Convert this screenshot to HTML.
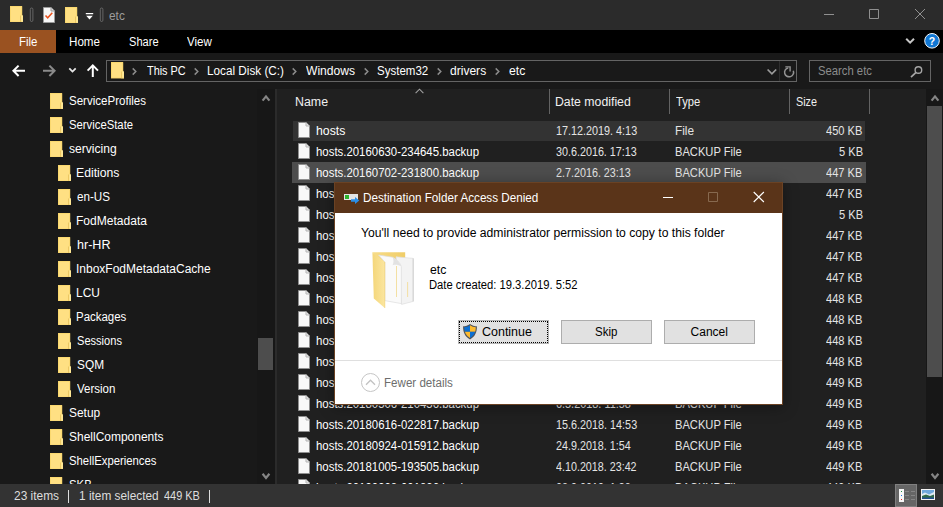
<!DOCTYPE html>
<html><head><meta charset="utf-8"><title>etc</title>
<style>
*{margin:0;padding:0;box-sizing:border-box}
html,body{width:943px;height:507px;overflow:hidden;background:#191919}
body{font-family:"Liberation Sans",sans-serif;font-size:12px;color:#fff;position:relative}
body *{position:absolute}
.t{white-space:nowrap;line-height:16px;height:16px;transform-origin:0 50%}
svg{display:block}
.clip{left:0;top:0;width:943px;height:484px;overflow:hidden}
</style></head><body>

<div style="left:0px;top:0px;width:943px;height:30px;background:#2b2b2b;"></div>
<div style="left:0px;top:30px;width:943px;height:23px;background:#000;"></div>
<div style="left:0px;top:30px;width:56px;height:23px;background:#9a5221;"></div>
<div style="left:0px;top:53px;width:943px;height:35px;background:#191919;"></div>
<div class="clip">
<div style="left:257px;top:89px;width:18px;height:395px;background:#171717;"></div>
<div style="left:275px;top:89px;width:2px;height:395px;background:#2b2b2b;"></div>
<div style="left:277px;top:89px;width:649px;height:395px;background:#202020;"></div>
<div style="left:926px;top:89px;width:17px;height:395px;background:#171717;"></div>
<svg style="left:10px;top:6px" width="13.3" height="16.300" viewBox="0 0 13.3 16.300"><path d="M0 0H12.100V9.400H13.300V16.300H0z" fill="#ffe083"/><path d="M0.400 16V0.400H11.700V9.400" fill="none" stroke="#f7d467" stroke-width=".8"/><path d="M10.300 9.500H13.300V16.300H10.300z" fill="#ffe896"/><path d="M10.600 9.500V16" stroke="#e3bc50" stroke-width=".8"/><path d="M0 15.800H13.300V16.300H0z" fill="#f0c858"/></svg>
<svg style="left:29px;top:7px" width="6" height="16" viewBox="29 7 6 16"><rect x="30.300" y="8" width="2.600" height="13.500" rx="1.300" fill="none" stroke="#747474" stroke-width=".8"/></svg>
<svg style="left:43px;top:7px" width="12" height="16" viewBox="0 0 12 16"><path d="M0.500 0.500h7.500l3.500 3.500v11.500h-11z" fill="#f7f7f7" stroke="#9a9a9a"/><path d="M8 0.500v3.500h3.500" fill="#ddd" stroke="#9a9a9a"/><path d="M2.500 8.500l2.200 2.300l4.600-5" fill="none" stroke="#e8501c" stroke-width="1.500"/></svg>
<svg style="left:65px;top:7px" width="13.3" height="16.300" viewBox="0 0 13.3 16.300"><path d="M0 0H12.100V9.400H13.300V16.300H0z" fill="#ffe083"/><path d="M0.400 16V0.400H11.700V9.400" fill="none" stroke="#f7d467" stroke-width=".8"/><path d="M10.300 9.500H13.300V16.300H10.300z" fill="#ffe896"/><path d="M10.600 9.500V16" stroke="#e3bc50" stroke-width=".8"/><path d="M0 15.800H13.300V16.300H0z" fill="#f0c858"/></svg>
<svg style="left:85px;top:11px" width="10" height="10" viewBox="85 11 10 10"><path d="M85.800 13.100h7.400v1.200h-7.400z M86.200 15.700h6.600L89.500 19.500z" fill="#fff"/></svg>
<svg style="left:99px;top:7px" width="6" height="16" viewBox="99 7 6 16"><rect x="100.300" y="8" width="2.600" height="13.500" rx="1.300" fill="none" stroke="#747474" stroke-width=".8"/></svg>
<span class="t" style="left:109.16px;top:8px;transform:scaleX(0.9868);color:#9c9c9c">etc</span>
<svg style="left:824px;top:14px" width="10" height="1" viewBox="0 0 10 1"><path d="M0 0h10v1H0z" fill="#909090"/></svg>
<svg style="left:868.500px;top:9px" width="10" height="10" viewBox="0 0 10 10"><path d="M0.500 0.500h9v9h-9z" fill="none" stroke="#909090"/></svg>
<svg style="left:915px;top:9px" width="10" height="10" viewBox="0 0 10 10"><path d="M0 0L10 10M10 0L0 10" fill="none" stroke="#909090" stroke-width="1"/></svg>
<span class="t" style="left:18.94px;top:34px;transform:scaleX(0.9551)">File</span>
<span class="t" style="left:69.43px;top:34px;transform:scaleX(0.9672)">Home</span>
<span class="t" style="left:128.85px;top:34px;transform:scaleX(0.9223)">Share</span>
<span class="t" style="left:187.05px;top:34px;transform:scaleX(0.9630)">View</span>
<svg style="left:902px;top:34px" width="16" height="14" viewBox="902 34 16 14"><path d="M906.200 38.800L910.100 42.700L914 38.800" fill="none" stroke="#c6c6c6" stroke-width="2"/></svg>
<svg style="left:923px;top:32px" width="18" height="18" viewBox="923 32 18 18"><circle cx="932" cy="40.800" r="7.300" fill="#1177d3" stroke="#f4f8fc" stroke-width="1"/><text x="932" y="44.600" text-anchor="middle" font-family="Liberation Sans, sans-serif" font-weight="bold" font-size="10.500" fill="#fff" style="position:static">?</text></svg>
<svg style="left:10px;top:62px" width="18" height="18" viewBox="10 62 18 18"><path d="M25 70.800H14M18.600 65.600L13.400 70.800l5.200 5.200" fill="none" stroke="#fff" stroke-width="2"/></svg>
<svg style="left:40px;top:62px" width="18" height="18" viewBox="40 62 18 18"><path d="M43 70.800H54M49.400 65.600L54.600 70.800l-5.200 5.200" fill="none" stroke="#8a8a8a" stroke-width="2"/></svg>
<svg style="left:66px;top:64px" width="14" height="12" viewBox="66 64 14 12"><path d="M69.300 68.400L72.500 71.600L75.700 68.400" fill="none" stroke="#e6e6e6" stroke-width="1.800"/></svg>
<svg style="left:84px;top:62px" width="18" height="18" viewBox="84 62 18 18"><path d="M92.800 77V66M87.600 70.600L92.800 65.400l5.200 5.200" fill="none" stroke="#fff" stroke-width="2"/></svg>
<div style="left:106px;top:60px;width:691px;height:22px;background:#191919;border:1px solid #646464"></div>
<div style="left:809px;top:60px;width:122px;height:22px;background:#191919;border:1px solid #646464"></div>
<svg style="left:110.7px;top:62.3px" width="13.3" height="16.300" viewBox="0 0 13.3 16.300"><path d="M0 0H12.100V9.400H13.300V16.300H0z" fill="#ffe083"/><path d="M0.400 16V0.400H11.700V9.400" fill="none" stroke="#f7d467" stroke-width=".8"/><path d="M10.300 9.500H13.300V16.300H10.300z" fill="#ffe896"/><path d="M10.600 9.500V16" stroke="#e3bc50" stroke-width=".8"/><path d="M0 15.800H13.300V16.300H0z" fill="#f0c858"/></svg>
<span class="t" style="left:146.63px;top:63px;transform:scaleX(0.9069)">This PC</span>
<span class="t" style="left:206.92px;top:63px;transform:scaleX(0.9785)">Local Disk (C:)</span>
<span class="t" style="left:306.3px;top:63px;transform:scaleX(1.0083)">Windows</span>
<span class="t" style="left:377.32px;top:63px;transform:scaleX(0.9597)">System32</span>
<span class="t" style="left:450.4px;top:63px;transform:scaleX(1.0043)">drivers</span>
<span class="t" style="left:508.89px;top:63px;transform:scaleX(1.0197)">etc</span>
<svg style="left:131px;top:66px" width="8" height="11" viewBox="131 66 8 11"><path d="M132.70 68.400L135.80 71.500L132.70 74.600" fill="none" stroke="#8c8c8c" stroke-width="1.500"/></svg>
<svg style="left:192.75px;top:66px" width="8" height="11" viewBox="192.75 66 8 11"><path d="M194.45 68.400L197.55 71.500L194.45 74.600" fill="none" stroke="#8c8c8c" stroke-width="1.500"/></svg>
<svg style="left:290.5px;top:66px" width="8" height="11" viewBox="290.5 66 8 11"><path d="M292.20 68.400L295.30 71.500L292.20 74.600" fill="none" stroke="#8c8c8c" stroke-width="1.500"/></svg>
<svg style="left:362.5px;top:66px" width="8" height="11" viewBox="362.5 66 8 11"><path d="M364.20 68.400L367.30 71.500L364.20 74.600" fill="none" stroke="#8c8c8c" stroke-width="1.500"/></svg>
<svg style="left:435.5px;top:66px" width="8" height="11" viewBox="435.5 66 8 11"><path d="M437.20 68.400L440.30 71.500L437.20 74.600" fill="none" stroke="#8c8c8c" stroke-width="1.500"/></svg>
<svg style="left:494px;top:66px" width="8" height="11" viewBox="494 66 8 11"><path d="M495.70 68.400L498.80 71.500L495.70 74.600" fill="none" stroke="#8c8c8c" stroke-width="1.500"/></svg>
<svg style="left:765px;top:66px" width="14" height="12" viewBox="765 66 14 12"><path d="M767.600 69.500L771.900 73.900L776.200 69.500" fill="none" stroke="#9a9a9a" stroke-width="1.700"/></svg>
<div style="left:779px;top:61px;width:1px;height:20px;background:#2e2e2e;"></div>
<svg style="left:781px;top:62px" width="15" height="18" viewBox="781 62 15 18"><path d="M793.300 70.700A4.500 4.500 0 1 1 788.200 67.900" fill="none" stroke="#929292" stroke-width="1.500"/><path d="M785.300 66.900H790.100V71.600" fill="none" stroke="#929292" stroke-width="1.400"/></svg>
<span class="t" style="left:817.84px;top:63px;transform:scaleX(0.9397);color:#8c8c8c">Search etc</span>
<svg style="left:908px;top:63px" width="16" height="16" viewBox="908 63 16 16"><circle cx="918.400" cy="70" r="3.300" fill="none" stroke="#a6a6a6" stroke-width="1.400"/><path d="M916 72.400L911 77.200" stroke="#a6a6a6" stroke-width="1.700" fill="none"/></svg>
<svg style="left:50.0px;top:92.5px" width="13.3" height="16.300" viewBox="0 0 13.3 16.300"><path d="M0 0H12.100V9.400H13.300V16.300H0z" fill="#ffe083"/><path d="M0.400 16V0.400H11.700V9.400" fill="none" stroke="#f7d467" stroke-width=".8"/><path d="M10.300 9.500H13.300V16.300H10.300z" fill="#ffe896"/><path d="M10.600 9.500V16" stroke="#e3bc50" stroke-width=".8"/><path d="M0 15.800H13.300V16.300H0z" fill="#f0c858"/></svg>
<span class="t" style="left:68.82px;top:93px;transform:scaleX(0.9620)">ServiceProfiles</span>
<svg style="left:50.0px;top:116.5px" width="13.3" height="16.300" viewBox="0 0 13.3 16.300"><path d="M0 0H12.100V9.400H13.300V16.300H0z" fill="#ffe083"/><path d="M0.400 16V0.400H11.700V9.400" fill="none" stroke="#f7d467" stroke-width=".8"/><path d="M10.300 9.500H13.300V16.300H10.300z" fill="#ffe896"/><path d="M10.600 9.500V16" stroke="#e3bc50" stroke-width=".8"/><path d="M0 15.800H13.300V16.300H0z" fill="#f0c858"/></svg>
<span class="t" style="left:68.83px;top:117px;transform:scaleX(0.9417)">ServiceState</span>
<svg style="left:50.0px;top:140.5px" width="13.3" height="16.300" viewBox="0 0 13.3 16.300"><path d="M0 0H12.100V9.400H13.300V16.300H0z" fill="#ffe083"/><path d="M0.400 16V0.400H11.700V9.400" fill="none" stroke="#f7d467" stroke-width=".8"/><path d="M10.300 9.500H13.300V16.300H10.300z" fill="#ffe896"/><path d="M10.600 9.500V16" stroke="#e3bc50" stroke-width=".8"/><path d="M0 15.800H13.300V16.300H0z" fill="#f0c858"/></svg>
<span class="t" style="left:69px;top:141px;transform:scaleX(1.0065)">servicing</span>
<svg style="left:57.5px;top:164.5px" width="13.3" height="16.300" viewBox="0 0 13.3 16.300"><path d="M0 0H12.100V9.400H13.300V16.300H0z" fill="#ffe083"/><path d="M0.400 16V0.400H11.700V9.400" fill="none" stroke="#f7d467" stroke-width=".8"/><path d="M10.300 9.500H13.300V16.300H10.300z" fill="#ffe896"/><path d="M10.600 9.500V16" stroke="#e3bc50" stroke-width=".8"/><path d="M0 15.800H13.300V16.300H0z" fill="#f0c858"/></svg>
<span class="t" style="left:76.38px;top:165px;transform:scaleX(1.0169)">Editions</span>
<svg style="left:57.5px;top:188.5px" width="13.3" height="16.300" viewBox="0 0 13.3 16.300"><path d="M0 0H12.100V9.400H13.300V16.300H0z" fill="#ffe083"/><path d="M0.400 16V0.400H11.700V9.400" fill="none" stroke="#f7d467" stroke-width=".8"/><path d="M10.300 9.500H13.300V16.300H10.300z" fill="#ffe896"/><path d="M10.600 9.500V16" stroke="#e3bc50" stroke-width=".8"/><path d="M0 15.800H13.300V16.300H0z" fill="#f0c858"/></svg>
<span class="t" style="left:76.91px;top:189px;transform:scaleX(0.9726)">en-US</span>
<svg style="left:57.5px;top:212.5px" width="13.3" height="16.300" viewBox="0 0 13.3 16.300"><path d="M0 0H12.100V9.400H13.300V16.300H0z" fill="#ffe083"/><path d="M0.400 16V0.400H11.700V9.400" fill="none" stroke="#f7d467" stroke-width=".8"/><path d="M10.300 9.500H13.300V16.300H10.300z" fill="#ffe896"/><path d="M10.600 9.500V16" stroke="#e3bc50" stroke-width=".8"/><path d="M0 15.800H13.300V16.300H0z" fill="#f0c858"/></svg>
<span class="t" style="left:76.4px;top:213px;transform:scaleX(1.0043)">FodMetadata</span>
<svg style="left:57.5px;top:236.5px" width="13.3" height="16.300" viewBox="0 0 13.3 16.300"><path d="M0 0H12.100V9.400H13.300V16.300H0z" fill="#ffe083"/><path d="M0.400 16V0.400H11.700V9.400" fill="none" stroke="#f7d467" stroke-width=".8"/><path d="M10.300 9.500H13.300V16.300H10.300z" fill="#ffe896"/><path d="M10.600 9.500V16" stroke="#e3bc50" stroke-width=".8"/><path d="M0 15.800H13.300V16.300H0z" fill="#f0c858"/></svg>
<span class="t" style="left:76.56px;top:237px;transform:scaleX(1.0458)">hr-HR</span>
<svg style="left:57.5px;top:260.5px" width="13.3" height="16.300" viewBox="0 0 13.3 16.300"><path d="M0 0H12.100V9.400H13.300V16.300H0z" fill="#ffe083"/><path d="M0.400 16V0.400H11.700V9.400" fill="none" stroke="#f7d467" stroke-width=".8"/><path d="M10.300 9.500H13.300V16.300H10.300z" fill="#ffe896"/><path d="M10.600 9.500V16" stroke="#e3bc50" stroke-width=".8"/><path d="M0 15.800H13.300V16.300H0z" fill="#f0c858"/></svg>
<span class="t" style="left:76.3px;top:261px;transform:scaleX(0.9992)">InboxFodMetadataCache</span>
<svg style="left:57.5px;top:284.5px" width="13.3" height="16.300" viewBox="0 0 13.3 16.300"><path d="M0 0H12.100V9.400H13.300V16.300H0z" fill="#ffe083"/><path d="M0.400 16V0.400H11.700V9.400" fill="none" stroke="#f7d467" stroke-width=".8"/><path d="M10.300 9.500H13.300V16.300H10.300z" fill="#ffe896"/><path d="M10.600 9.500V16" stroke="#e3bc50" stroke-width=".8"/><path d="M0 15.800H13.300V16.300H0z" fill="#f0c858"/></svg>
<span class="t" style="left:76.4px;top:285px;transform:scaleX(0.9955)">LCU</span>
<svg style="left:57.5px;top:308.5px" width="13.3" height="16.300" viewBox="0 0 13.3 16.300"><path d="M0 0H12.100V9.400H13.300V16.300H0z" fill="#ffe083"/><path d="M0.400 16V0.400H11.700V9.400" fill="none" stroke="#f7d467" stroke-width=".8"/><path d="M10.300 9.500H13.300V16.300H10.300z" fill="#ffe896"/><path d="M10.600 9.500V16" stroke="#e3bc50" stroke-width=".8"/><path d="M0 15.800H13.300V16.300H0z" fill="#f0c858"/></svg>
<span class="t" style="left:76.44px;top:309px;transform:scaleX(0.9552)">Packages</span>
<svg style="left:57.5px;top:332.5px" width="13.3" height="16.300" viewBox="0 0 13.3 16.300"><path d="M0 0H12.100V9.400H13.300V16.300H0z" fill="#ffe083"/><path d="M0.400 16V0.400H11.700V9.400" fill="none" stroke="#f7d467" stroke-width=".8"/><path d="M10.300 9.500H13.300V16.300H10.300z" fill="#ffe896"/><path d="M10.600 9.500V16" stroke="#e3bc50" stroke-width=".8"/><path d="M0 15.800H13.300V16.300H0z" fill="#f0c858"/></svg>
<span class="t" style="left:76.85px;top:333px;transform:scaleX(0.9224)">Sessions</span>
<svg style="left:57.5px;top:356.5px" width="13.3" height="16.300" viewBox="0 0 13.3 16.300"><path d="M0 0H12.100V9.400H13.300V16.300H0z" fill="#ffe083"/><path d="M0.400 16V0.400H11.700V9.400" fill="none" stroke="#f7d467" stroke-width=".8"/><path d="M10.300 9.500H13.300V16.300H10.300z" fill="#ffe896"/><path d="M10.600 9.500V16" stroke="#e3bc50" stroke-width=".8"/><path d="M0 15.800H13.300V16.300H0z" fill="#f0c858"/></svg>
<span class="t" style="left:76.81px;top:357px;transform:scaleX(0.9884)">SQM</span>
<svg style="left:57.5px;top:380.5px" width="13.3" height="16.300" viewBox="0 0 13.3 16.300"><path d="M0 0H12.100V9.400H13.300V16.300H0z" fill="#ffe083"/><path d="M0.400 16V0.400H11.700V9.400" fill="none" stroke="#f7d467" stroke-width=".8"/><path d="M10.300 9.500H13.300V16.300H10.300z" fill="#ffe896"/><path d="M10.600 9.500V16" stroke="#e3bc50" stroke-width=".8"/><path d="M0 15.800H13.300V16.300H0z" fill="#f0c858"/></svg>
<span class="t" style="left:77.3px;top:381px;transform:scaleX(0.9591)">Version</span>
<svg style="left:50.0px;top:404.5px" width="13.3" height="16.300" viewBox="0 0 13.3 16.300"><path d="M0 0H12.100V9.400H13.300V16.300H0z" fill="#ffe083"/><path d="M0.400 16V0.400H11.700V9.400" fill="none" stroke="#f7d467" stroke-width=".8"/><path d="M10.300 9.500H13.300V16.300H10.300z" fill="#ffe896"/><path d="M10.600 9.500V16" stroke="#e3bc50" stroke-width=".8"/><path d="M0 15.800H13.300V16.300H0z" fill="#f0c858"/></svg>
<span class="t" style="left:68.8px;top:405px;transform:scaleX(0.9934)">Setup</span>
<svg style="left:50.0px;top:428.5px" width="13.3" height="16.300" viewBox="0 0 13.3 16.300"><path d="M0 0H12.100V9.400H13.300V16.300H0z" fill="#ffe083"/><path d="M0.400 16V0.400H11.700V9.400" fill="none" stroke="#f7d467" stroke-width=".8"/><path d="M10.300 9.500H13.300V16.300H10.300z" fill="#ffe896"/><path d="M10.600 9.500V16" stroke="#e3bc50" stroke-width=".8"/><path d="M0 15.800H13.300V16.300H0z" fill="#f0c858"/></svg>
<span class="t" style="left:68.8px;top:429px;transform:scaleX(0.9979)">ShellComponents</span>
<svg style="left:50.0px;top:452.5px" width="13.3" height="16.300" viewBox="0 0 13.3 16.300"><path d="M0 0H12.100V9.400H13.300V16.300H0z" fill="#ffe083"/><path d="M0.400 16V0.400H11.700V9.400" fill="none" stroke="#f7d467" stroke-width=".8"/><path d="M10.300 9.500H13.300V16.300H10.300z" fill="#ffe896"/><path d="M10.600 9.500V16" stroke="#e3bc50" stroke-width=".8"/><path d="M0 15.800H13.300V16.300H0z" fill="#f0c858"/></svg>
<span class="t" style="left:68.83px;top:453px;transform:scaleX(0.9433)">ShellExperiences</span>
<svg style="left:50.0px;top:476.5px" width="13.3" height="16.300" viewBox="0 0 13.3 16.300"><path d="M0 0H12.100V9.400H13.300V16.300H0z" fill="#ffe083"/><path d="M0.400 16V0.400H11.700V9.400" fill="none" stroke="#f7d467" stroke-width=".8"/><path d="M10.300 9.500H13.300V16.300H10.300z" fill="#ffe896"/><path d="M10.600 9.500V16" stroke="#e3bc50" stroke-width=".8"/><path d="M0 15.800H13.300V16.300H0z" fill="#f0c858"/></svg>
<span class="t" style="left:68.83px;top:477px;transform:scaleX(0.9450)">SKB</span>
<svg style="left:259.5px;top:92px" width="12" height="12" viewBox="259.5 92 12 12"><path d="M262.1 100.600L265.5 96.400L268.9 100.600" fill="none" stroke="#858585" stroke-width="2.200"/></svg>
<div style="left:258px;top:338px;width:15px;height:32px;background:#4d4d4d;"></div>
<svg style="left:259.5px;top:470px" width="12" height="12" viewBox="259.5 470 12 12"><path d="M262.1 473.800L265.5 478L268.9 473.800" fill="none" stroke="#858585" stroke-width="2.200"/></svg>
<span class="t" style="left:294.62px;top:94px;transform:scaleX(1.0328);color:#f0f0f0">Name</span>
<span class="t" style="left:555.38px;top:94px;transform:scaleX(1.0235);color:#f0f0f0">Date modified</span>
<span class="t" style="left:676.12px;top:94px;transform:scaleX(0.9325);color:#f0f0f0">Type</span>
<span class="t" style="left:795.61px;top:94px;transform:scaleX(0.9009);color:#f0f0f0">Size</span>
<div style="left:549px;top:89px;width:1px;height:25px;background:#636363;"></div>
<div style="left:669px;top:89px;width:1px;height:25px;background:#636363;"></div>
<div style="left:789px;top:89px;width:1px;height:25px;background:#636363;"></div>
<div style="left:869px;top:89px;width:1px;height:25px;background:#636363;"></div>
<svg style="left:414.700px;top:87.800px" width="9" height="6" viewBox="0 0 9 6"><path d="M0.600 5.200L4.500 1.200L8.400 5.200" fill="none" stroke="#a0a0a0" stroke-width="1.100"/></svg>
<div style="left:293px;top:121px;width:571.5px;height:20px;background:#333;"></div>
<div style="left:292px;top:162px;width:573.5px;height:21px;background:#4d4d4d;"></div>
<svg style="left:298px;top:122px" width="12" height="16" viewBox="0 0 12 16"><path d="M0.500 0.500h7.500l3.500 3.500v11.500h-11z" fill="#f8f8f8" stroke="#909090"/><path d="M8 0.500v3.500h3.500" fill="#e6e6e6" stroke="#b4b4b4"/></svg>
<span class="t" style="left:315.83px;top:123px;transform:scaleX(1.0219)">hosts</span>
<span class="t" style="left:555.79px;top:123px;transform:scaleX(0.9007);color:#e4e4e4">17.12.2019. 4:13</span>
<span class="t" style="left:675.42px;top:123px;transform:scaleX(0.9831);color:#e4e4e4">File</span>
<span class="t" style="left:826.42px;top:123px;transform:scaleX(0.9245);color:#e4e4e4">450 KB</span>
<svg style="left:298px;top:143px" width="12" height="16" viewBox="0 0 12 16"><path d="M0.500 0.500h7.500l3.500 3.500v11.500h-11z" fill="#f8f8f8" stroke="#909090"/><path d="M8 0.500v3.500h3.500" fill="#e6e6e6" stroke="#b4b4b4"/></svg>
<span class="t" style="left:315.89px;top:144px;transform:scaleX(0.9504)">hosts.20160630-234645.backup</span>
<span class="t" style="left:556.15px;top:144px;transform:scaleX(0.8966);color:#e4e4e4">30.6.2016. 17:13</span>
<span class="t" style="left:675.47px;top:144px;transform:scaleX(0.9291);color:#e4e4e4">BACKUP File</span>
<span class="t" style="left:838.74px;top:144px;transform:scaleX(0.9237);color:#e4e4e4">5 KB</span>
<svg style="left:298px;top:164px" width="12" height="16" viewBox="0 0 12 16"><path d="M0.500 0.500h7.500l3.500 3.500v11.500h-11z" fill="#f8f8f8" stroke="#909090"/><path d="M8 0.500v3.500h3.500" fill="#e6e6e6" stroke="#b4b4b4"/></svg>
<span class="t" style="left:315.89px;top:165px;transform:scaleX(0.9504)">hosts.20160702-231800.backup</span>
<span class="t" style="left:556.06px;top:165px;transform:scaleX(0.8967);color:#e4e4e4">2.7.2016. 23:13</span>
<span class="t" style="left:675.47px;top:165px;transform:scaleX(0.9291);color:#e4e4e4">BACKUP File</span>
<span class="t" style="left:826.42px;top:165px;transform:scaleX(0.9245);color:#e4e4e4">447 KB</span>
<svg style="left:298px;top:185px" width="12" height="16" viewBox="0 0 12 16"><path d="M0.500 0.500h7.500l3.500 3.500v11.500h-11z" fill="#f8f8f8" stroke="#909090"/><path d="M8 0.500v3.500h3.500" fill="#e6e6e6" stroke="#b4b4b4"/></svg>
<span class="t" style="left:315.89px;top:186px;transform:scaleX(0.9504)">hosts.20160716-002308.backup</span>
<span class="t" style="left:555.79px;top:186px;transform:scaleX(0.8989);color:#e4e4e4">16.7.2016. 0:24</span>
<span class="t" style="left:675.47px;top:186px;transform:scaleX(0.9291);color:#e4e4e4">BACKUP File</span>
<span class="t" style="left:826.42px;top:186px;transform:scaleX(0.9245);color:#e4e4e4">447 KB</span>
<svg style="left:298px;top:206px" width="12" height="16" viewBox="0 0 12 16"><path d="M0.500 0.500h7.500l3.500 3.500v11.500h-11z" fill="#f8f8f8" stroke="#909090"/><path d="M8 0.500v3.500h3.500" fill="#e6e6e6" stroke="#b4b4b4"/></svg>
<span class="t" style="left:315.89px;top:207px;transform:scaleX(0.9554)">hosts.20160803-114412.backup</span>
<span class="t" style="left:556.15px;top:207px;transform:scaleX(0.9055);color:#e4e4e4">3.8.2016. 11:45</span>
<span class="t" style="left:675.47px;top:207px;transform:scaleX(0.9291);color:#e4e4e4">BACKUP File</span>
<span class="t" style="left:838.74px;top:207px;transform:scaleX(0.9237);color:#e4e4e4">5 KB</span>
<svg style="left:298px;top:227px" width="12" height="16" viewBox="0 0 12 16"><path d="M0.500 0.500h7.500l3.500 3.500v11.500h-11z" fill="#f8f8f8" stroke="#909090"/><path d="M8 0.500v3.500h3.500" fill="#e6e6e6" stroke="#b4b4b4"/></svg>
<span class="t" style="left:315.89px;top:228px;transform:scaleX(0.9504)">hosts.20161012-201530.backup</span>
<span class="t" style="left:555.79px;top:228px;transform:scaleX(0.9003);color:#e4e4e4">12.10.2016. 20:16</span>
<span class="t" style="left:675.47px;top:228px;transform:scaleX(0.9291);color:#e4e4e4">BACKUP File</span>
<span class="t" style="left:826.42px;top:228px;transform:scaleX(0.9245);color:#e4e4e4">447 KB</span>
<svg style="left:298px;top:248px" width="12" height="16" viewBox="0 0 12 16"><path d="M0.500 0.500h7.500l3.500 3.500v11.500h-11z" fill="#f8f8f8" stroke="#909090"/><path d="M8 0.500v3.500h3.500" fill="#e6e6e6" stroke="#b4b4b4"/></svg>
<span class="t" style="left:315.89px;top:249px;transform:scaleX(0.9504)">hosts.20161227-180944.backup</span>
<span class="t" style="left:556.06px;top:249px;transform:scaleX(0.8966);color:#e4e4e4">27.12.2016. 18:10</span>
<span class="t" style="left:675.47px;top:249px;transform:scaleX(0.9291);color:#e4e4e4">BACKUP File</span>
<span class="t" style="left:826.42px;top:249px;transform:scaleX(0.9245);color:#e4e4e4">447 KB</span>
<svg style="left:298px;top:269px" width="12" height="16" viewBox="0 0 12 16"><path d="M0.500 0.500h7.500l3.500 3.500v11.500h-11z" fill="#f8f8f8" stroke="#909090"/><path d="M8 0.500v3.500h3.500" fill="#e6e6e6" stroke="#b4b4b4"/></svg>
<span class="t" style="left:315.89px;top:270px;transform:scaleX(0.9504)">hosts.20170314-093021.backup</span>
<span class="t" style="left:555.79px;top:270px;transform:scaleX(0.9011);color:#e4e4e4">14.3.2017. 9:31</span>
<span class="t" style="left:675.47px;top:270px;transform:scaleX(0.9291);color:#e4e4e4">BACKUP File</span>
<span class="t" style="left:826.42px;top:270px;transform:scaleX(0.9245);color:#e4e4e4">447 KB</span>
<svg style="left:298px;top:290px" width="12" height="16" viewBox="0 0 12 16"><path d="M0.500 0.500h7.500l3.500 3.500v11.500h-11z" fill="#f8f8f8" stroke="#909090"/><path d="M8 0.500v3.500h3.500" fill="#e6e6e6" stroke="#b4b4b4"/></svg>
<span class="t" style="left:315.89px;top:291px;transform:scaleX(0.9554)">hosts.20170520-221137.backup</span>
<span class="t" style="left:556.06px;top:291px;transform:scaleX(0.8976);color:#e4e4e4">20.5.2017. 22:12</span>
<span class="t" style="left:675.47px;top:291px;transform:scaleX(0.9291);color:#e4e4e4">BACKUP File</span>
<span class="t" style="left:826.42px;top:291px;transform:scaleX(0.9245);color:#e4e4e4">448 KB</span>
<svg style="left:298px;top:311px" width="12" height="16" viewBox="0 0 12 16"><path d="M0.500 0.500h7.500l3.500 3.500v11.500h-11z" fill="#f8f8f8" stroke="#909090"/><path d="M8 0.500v3.500h3.500" fill="#e6e6e6" stroke="#b4b4b4"/></svg>
<span class="t" style="left:315.89px;top:312px;transform:scaleX(0.9554)">hosts.20170811-134502.backup</span>
<span class="t" style="left:555.78px;top:312px;transform:scaleX(0.9089);color:#e4e4e4">11.8.2017. 13:46</span>
<span class="t" style="left:675.47px;top:312px;transform:scaleX(0.9291);color:#e4e4e4">BACKUP File</span>
<span class="t" style="left:826.42px;top:312px;transform:scaleX(0.9245);color:#e4e4e4">448 KB</span>
<svg style="left:298px;top:332px" width="12" height="16" viewBox="0 0 12 16"><path d="M0.500 0.500h7.500l3.500 3.500v11.500h-11z" fill="#f8f8f8" stroke="#909090"/><path d="M8 0.500v3.500h3.500" fill="#e6e6e6" stroke="#b4b4b4"/></svg>
<span class="t" style="left:315.89px;top:333px;transform:scaleX(0.9554)">hosts.20171103-071859.backup</span>
<span class="t" style="left:556.15px;top:333px;transform:scaleX(0.9055);color:#e4e4e4">3.11.2017. 7:19</span>
<span class="t" style="left:675.47px;top:333px;transform:scaleX(0.9291);color:#e4e4e4">BACKUP File</span>
<span class="t" style="left:826.42px;top:333px;transform:scaleX(0.9245);color:#e4e4e4">448 KB</span>
<svg style="left:298px;top:353px" width="12" height="16" viewBox="0 0 12 16"><path d="M0.500 0.500h7.500l3.500 3.500v11.500h-11z" fill="#f8f8f8" stroke="#909090"/><path d="M8 0.500v3.500h3.500" fill="#e6e6e6" stroke="#b4b4b4"/></svg>
<span class="t" style="left:315.89px;top:354px;transform:scaleX(0.9504)">hosts.20180109-160328.backup</span>
<span class="t" style="left:556.06px;top:354px;transform:scaleX(0.8956);color:#e4e4e4">9.1.2018. 16:04</span>
<span class="t" style="left:675.47px;top:354px;transform:scaleX(0.9291);color:#e4e4e4">BACKUP File</span>
<span class="t" style="left:826.42px;top:354px;transform:scaleX(0.9245);color:#e4e4e4">448 KB</span>
<svg style="left:298px;top:374px" width="12" height="16" viewBox="0 0 12 16"><path d="M0.500 0.500h7.500l3.500 3.500v11.500h-11z" fill="#f8f8f8" stroke="#909090"/><path d="M8 0.500v3.500h3.500" fill="#e6e6e6" stroke="#b4b4b4"/></svg>
<span class="t" style="left:315.89px;top:375px;transform:scaleX(0.9504)">hosts.20180302-195540.backup</span>
<span class="t" style="left:556.06px;top:375px;transform:scaleX(0.8967);color:#e4e4e4">2.3.2018. 19:56</span>
<span class="t" style="left:675.47px;top:375px;transform:scaleX(0.9291);color:#e4e4e4">BACKUP File</span>
<span class="t" style="left:826.42px;top:375px;transform:scaleX(0.9245);color:#e4e4e4">449 KB</span>
<svg style="left:298px;top:395px" width="12" height="16" viewBox="0 0 12 16"><path d="M0.500 0.500h7.500l3.500 3.500v11.500h-11z" fill="#f8f8f8" stroke="#909090"/><path d="M8 0.500v3.500h3.500" fill="#e6e6e6" stroke="#b4b4b4"/></svg>
<span class="t" style="left:315.89px;top:396px;transform:scaleX(0.9504)">hosts.20180506-210456.backup</span>
<span class="t" style="left:556.06px;top:396px;transform:scaleX(0.9066);color:#e4e4e4">6.5.2018. 11:58</span>
<span class="t" style="left:675.47px;top:396px;transform:scaleX(0.9291);color:#e4e4e4">BACKUP File</span>
<span class="t" style="left:826.42px;top:396px;transform:scaleX(0.9245);color:#e4e4e4">449 KB</span>
<svg style="left:298px;top:416px" width="12" height="16" viewBox="0 0 12 16"><path d="M0.500 0.500h7.500l3.500 3.500v11.500h-11z" fill="#f8f8f8" stroke="#909090"/><path d="M8 0.500v3.500h3.500" fill="#e6e6e6" stroke="#b4b4b4"/></svg>
<span class="t" style="left:315.89px;top:417px;transform:scaleX(0.9504)">hosts.20180616-022817.backup</span>
<span class="t" style="left:555.79px;top:417px;transform:scaleX(0.9007);color:#e4e4e4">15.6.2018. 14:53</span>
<span class="t" style="left:675.47px;top:417px;transform:scaleX(0.9291);color:#e4e4e4">BACKUP File</span>
<span class="t" style="left:826.42px;top:417px;transform:scaleX(0.9245);color:#e4e4e4">449 KB</span>
<svg style="left:298px;top:437px" width="12" height="16" viewBox="0 0 12 16"><path d="M0.500 0.500h7.500l3.500 3.500v11.500h-11z" fill="#f8f8f8" stroke="#909090"/><path d="M8 0.500v3.500h3.500" fill="#e6e6e6" stroke="#b4b4b4"/></svg>
<span class="t" style="left:315.89px;top:438px;transform:scaleX(0.9504)">hosts.20180924-015912.backup</span>
<span class="t" style="left:556.06px;top:438px;transform:scaleX(0.8956);color:#e4e4e4">24.9.2018. 1:54</span>
<span class="t" style="left:675.47px;top:438px;transform:scaleX(0.9291);color:#e4e4e4">BACKUP File</span>
<span class="t" style="left:826.42px;top:438px;transform:scaleX(0.9245);color:#e4e4e4">449 KB</span>
<svg style="left:298px;top:458px" width="12" height="16" viewBox="0 0 12 16"><path d="M0.500 0.500h7.500l3.500 3.500v11.500h-11z" fill="#f8f8f8" stroke="#909090"/><path d="M8 0.500v3.500h3.500" fill="#e6e6e6" stroke="#b4b4b4"/></svg>
<span class="t" style="left:315.89px;top:459px;transform:scaleX(0.9504)">hosts.20181005-193505.backup</span>
<span class="t" style="left:556.33px;top:459px;transform:scaleX(0.8946);color:#e4e4e4">4.10.2018. 23:42</span>
<span class="t" style="left:675.47px;top:459px;transform:scaleX(0.9291);color:#e4e4e4">BACKUP File</span>
<span class="t" style="left:826.42px;top:459px;transform:scaleX(0.9245);color:#e4e4e4">449 KB</span>
<svg style="left:298px;top:479px" width="12" height="16" viewBox="0 0 12 16"><path d="M0.500 0.500h7.500l3.500 3.500v11.500h-11z" fill="#f8f8f8" stroke="#909090"/><path d="M8 0.500v3.500h3.500" fill="#e6e6e6" stroke="#b4b4b4"/></svg>
<span class="t" style="left:315.89px;top:480px;transform:scaleX(0.9504)">hosts.20190928-001826.backup</span>
<span class="t" style="left:556.06px;top:480px;transform:scaleX(0.8967);color:#e4e4e4">28.9.2019. 1:38</span>
<span class="t" style="left:675.47px;top:480px;transform:scaleX(0.9291);color:#e4e4e4">BACKUP File</span>
<span class="t" style="left:826.42px;top:480px;transform:scaleX(0.9245);color:#e4e4e4">449 KB</span>
<svg style="left:928.5px;top:92px" width="12" height="12" viewBox="928.5 92 12 12"><path d="M931.1 100.600L934.5 96.400L937.9 100.600" fill="none" stroke="#858585" stroke-width="2.200"/></svg>
<div style="left:927px;top:106px;width:15px;height:271px;background:#4d4d4d;"></div>
<svg style="left:928.5px;top:470px" width="12" height="12" viewBox="928.5 470 12 12"><path d="M931.1 473.800L934.5 478L937.9 473.800" fill="none" stroke="#858585" stroke-width="2.200"/></svg>
</div>
<div style="left:0px;top:484px;width:943px;height:23px;background:#333;"></div>
<span class="t" style="left:13.8px;top:488px;transform:scaleX(0.9932);color:#dedede">23 items</span>
<div style="left:68px;top:490px;width:1px;height:13px;background:#dedede;"></div>
<span class="t" style="left:78.51px;top:488px;transform:scaleX(0.9873);color:#dedede">1 item selected</span>
<span class="t" style="left:164.13px;top:488px;transform:scaleX(0.9115);color:#dedede">449 KB</span>
<div style="left:209px;top:490px;width:1px;height:13px;background:#dedede;"></div>
<div style="left:895px;top:484px;width:22px;height:23px;background:#666;border:1px solid #808080"></div>
<svg style="left:898px;top:488px" width="18" height="15" viewBox="898 488 18 15"><rect x="899" y="489" width="5" height="13" fill="#f6f6f6"/><rect x="901" y="491" width="1" height="1" fill="#1f8a3f"/><rect x="901" y="495" width="1" height="1" fill="#1f6fe0"/><rect x="901" y="499" width="1" height="1" fill="#e02020"/><path d="M905 491.500h4M911 491.500h4M905 495.500h4M911 495.500h4M905 499.500h4M911 499.500h4" stroke="#858585" stroke-width="1"/></svg>
<svg style="left:921px;top:489px" width="14" height="11" viewBox="921 489 14 11"><rect x="921" y="489" width="14" height="11" fill="#f4f4f4"/><rect x="922" y="490" width="12" height="9" fill="#6fa8dc"/><path d="M922 494l3-1.500l4 2l5-2.500v4h-12z" fill="#dfeaf2"/><path d="M922 496l4-1.500l4 1.500l4-1.500v4.500h-12z" fill="#2f6a4a"/><path d="M922 497.500h12v1.500h-12z" fill="#24508f"/></svg>
<div style="left:334px;top:182px;width:449px;height:223px;background:#fff;border:1px solid #6a4224;box-shadow:0 2px 14px rgba(0,0,0,.36)"></div>
<div style="left:335px;top:183px;width:447px;height:30px;background:#5a3419;"></div>
<svg style="left:343px;top:192px" width="18" height="13" viewBox="343 192 18 13"><rect x="344" y="194" width="14" height="6" fill="#e4e4e4"/><rect x="345" y="195" width="4" height="4" fill="#2db52d"/><path d="M351 199.200H355V197L359.300 200.500L355 204V201.800H351z" fill="#2a8fe8"/></svg>
<span class="t" style="left:363.43px;top:190px;transform:scaleX(0.9735)">Destination Folder Access Denied</span>
<svg style="left:662.5px;top:197px" width="10" height="1" viewBox="662.5 197 10 1"><path d="M662.500 197h10v1h-10z" fill="#fff"/></svg>
<svg style="left:707.5px;top:192px" width="10" height="10" viewBox="707.5 192 10 10"><path d="M708 192.500h9v9h-9z" fill="none" stroke="#87694f"/></svg>
<svg style="left:752px;top:191px" width="13" height="12" viewBox="752 191 13 12"><path d="M753.700 192L763.900 202M763.900 192L753.700 202" fill="none" stroke="#fff" stroke-width="1.100"/></svg>
<span class="t" style="left:361.1px;top:225px;transform:scaleX(1.0134);color:#000">You'll need to provide administrator permission to copy to this folder</span>
<svg style="left:368px;top:248px" width="50" height="64" viewBox="368 248 50 64"><defs><linearGradient id="g1" x1="0" y1="0" x2="1" y2="0"><stop offset="0" stop-color="#f4d679"/><stop offset="1" stop-color="#fbe6a0"/></linearGradient><linearGradient id="g2" x1="0" y1="0" x2="1" y2="0"><stop offset="0" stop-color="#f7dc88"/><stop offset="1" stop-color="#f0cd68"/></linearGradient></defs><path d="M372.400 252.300H405.200V264H384z" fill="url(#g2)"/><path d="M396 256.800L413.200 258.400V301.400L401.600 304.400z" fill="#f3f3f3" stroke="#dedede" stroke-width=".7"/><path d="M413.200 258.400V301.400" stroke="#cfcfcf" stroke-width="1"/><path d="M378.500 255L392.600 257.200C396.500 259 399.800 262.500 401.400 266.500V303.600L384.800 300.600V262z" fill="#fafafa" stroke="#dcdcdc" stroke-width=".7"/><path d="M392.600 257.200C393.800 260 393.800 262.500 392.600 265.200C395.500 264.300 398.600 264.800 401.400 266.500C399.800 262.500 396.500 259 392.600 257.200z" fill="#e2e2e2"/><path d="M396.500 266V297M407.600 282V297" stroke="#f1d98e" stroke-width=".8"/><path d="M372.400 252.300L384.800 262V308L373.800 298.500z" fill="url(#g1)"/><path d="M384.800 262V308" stroke="#ecca66" stroke-width=".6"/></svg>
<span class="t" style="left:429.89px;top:262px;transform:scaleX(1.0197);color:#000">etc</span>
<span class="t" style="left:429.46px;top:277px;transform:scaleX(0.9351);color:#000">Date created: 19.3.2019. 5:52</span>
<div style="left:458px;top:320px;width:90.5px;height:23.5px;background:#e1e1e1;border:1px solid #b4b4b4"></div>
<div style="left:459px;top:321px;width:88.5px;height:21.5px;background:transparent;border:1px dotted #000"></div>
<svg style="left:461px;top:322px" width="18" height="19" viewBox="461 322 18 19"><defs><clipPath id="sc"><path d="M470 325.200C468.200 326.500 466.200 327.100 464.200 327.200C464.200 332 466 335.700 470 338.100C474 335.700 475.800 332 475.800 327.200C473.800 327.100 471.800 326.500 470 325.200z"/></clipPath></defs><path d="M470 323.900C467.800 325.500 465.500 326.200 463.100 326.200C462.900 332.200 465 336.700 470 339.400C475 336.700 477.100 332.200 476.900 326.200C474.500 326.200 472.200 325.500 470 323.900z" fill="#4f5358"/><g clip-path="url(#sc)"><rect x="463" y="323" width="7" height="8.800" fill="#0b6fd2"/><rect x="470" y="323" width="8" height="8.800" fill="#fdba2f"/><rect x="463" y="331.800" width="7" height="8" fill="#fdba2f"/><rect x="470" y="331.800" width="8" height="8" fill="#0b6fd2"/></g></svg>
<span class="t" style="left:481.78px;top:324px;transform:scaleX(1.0394);color:#000">Continue</span>
<div style="left:561px;top:320px;width:91px;height:23.5px;background:#e1e1e1;border:1px solid #adadad"></div>
<span class="t" style="left:594.83px;top:324px;transform:scaleX(0.9572);color:#000">Skip</span>
<div style="left:664px;top:320px;width:90.5px;height:23.5px;background:#e1e1e1;border:1px solid #adadad"></div>
<span class="t" style="left:690.55px;top:324px;transform:scaleX(1.0000);color:#000">Cancel</span>
<div style="left:335px;top:360px;width:447px;height:1px;background:#dfdfdf;"></div>
<svg style="left:359px;top:371px" width="22" height="22" viewBox="359 371 22 22"><circle cx="370.500" cy="382.500" r="9" fill="#fff" stroke="#c6c6c6" stroke-width="1"/><path d="M366 384.700L370.500 380.200L375 384.700" fill="none" stroke="#c2c2c2" stroke-width="1.300"/></svg>
<span class="t" style="left:384.43px;top:375px;transform:scaleX(0.9657);color:#6d6d6d">Fewer details</span>
</body></html>
